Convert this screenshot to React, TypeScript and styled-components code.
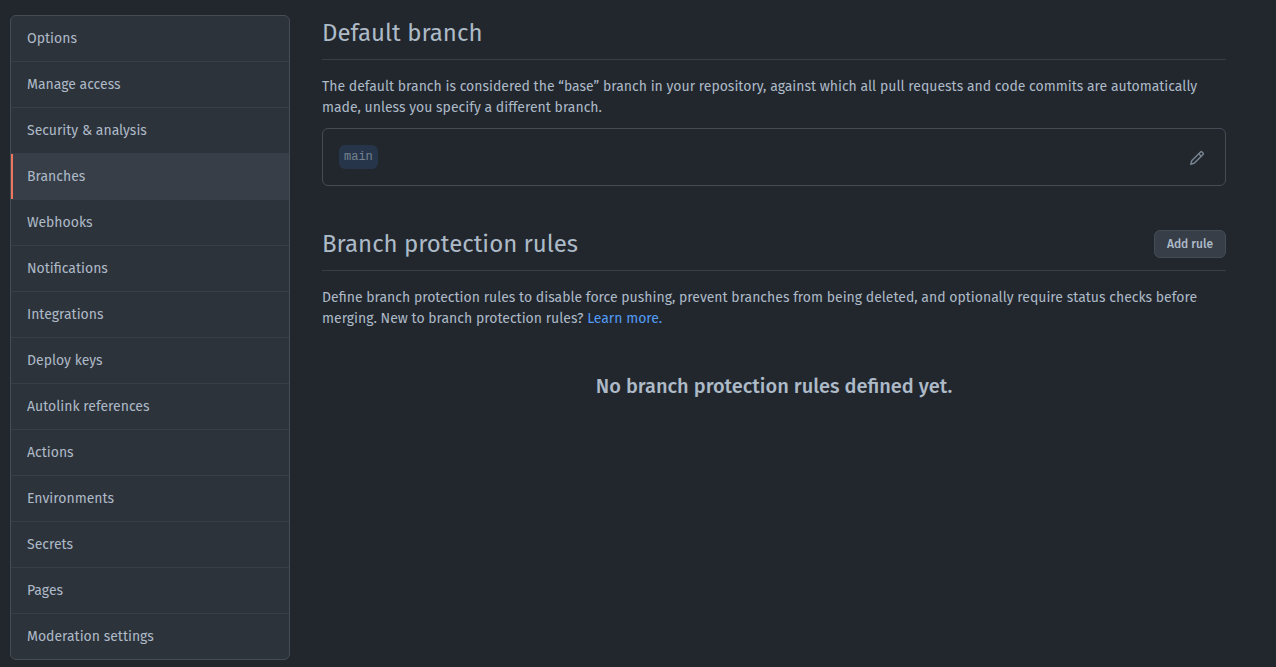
import React from "react";
import styled, { createGlobalStyle } from "styled-components";

const GlobalStyle = createGlobalStyle`
  * { box-sizing: border-box; }
  body {
    margin: 0;
    background: #22272e;
    color: #adbac7;
    font-family: "Fira Sans", "Noto Sans", "Open Sans", sans-serif;
    font-size: 14px;
    line-height: 21px;
  }
`;

const Page = styled.div`
  display: flex;
  align-items: flex-start;
  gap: 32px;
  padding: 15px 50px 7px 10px;
`;

const Menu = styled.nav`
  flex: 0 0 280px;
  border: 1px solid #444c56;
  border-radius: 6px;
  background: #2d333b;
  overflow: hidden;
`;

const MenuItem = styled.a<{ $current: boolean }>`
  display: block;
  padding: 12px 16px;
  color: #adbac7;
  text-decoration: none;
  background: ${(p) => (p.$current ? "#373e47" : "transparent")};
  box-shadow: ${(p) => (p.$current ? "inset 2px 0 0 #ec775c" : "none")};
  border-bottom: 1px solid #373e47;

  &:last-child {
    border-bottom: 0;
  }
`;

const Content = styled.main`
  flex: 1;
  min-width: 0;
`;

const Section = styled.section`
  & + & {
    margin-top: 40px;
  }
`;

const SectionHeader = styled.header`
  display: flex;
  justify-content: space-between;
  align-items: center;
  padding-bottom: 8px;
  margin-bottom: 16px;
  border-bottom: 1px solid #373e47;
`;

const Title = styled.h2`
  margin: 0;
  font-size: 24px;
  line-height: 36px;
  font-weight: 400;
`;

const Text = styled.p`
  margin: 0;
`;

const Link = styled.a`
  color: #539bf5;
  text-decoration: none;
`;

const BranchBox = styled.div`
  display: flex;
  justify-content: space-between;
  align-items: center;
  margin-top: 10px;
  padding: 16px;
  border: 1px solid #444c56;
  border-radius: 6px;
`;

const BranchName = styled.code`
  padding: 0 5px;
  border-radius: 6px;
  background: #263549;
  color: #768390;
  font-family: "Liberation Mono", monospace;
  font-size: 12px;
  line-height: 24px;
`;

const IconButton = styled.button`
  display: flex;
  padding: 5px 4px 3px;
  border: 0;
  background: none;
  color: #768390;
`;

const Button = styled.button`
  padding: 3px 12px;
  border: 1px solid #444c56;
  border-radius: 6px;
  background: #373e47;
  color: #adbac7;
  font-family: inherit;
  font-size: 12px;
  font-weight: 500;
  line-height: 20px;
`;

const Blank = styled.h3`
  margin: 40px 0 0;
  font-size: 20px;
  line-height: 34px;
  font-weight: 500;
  text-align: center;
`;

const items = [
  "Options",
  "Manage access",
  "Security & analysis",
  "Branches",
  "Webhooks",
  "Notifications",
  "Integrations",
  "Deploy keys",
  "Autolink references",
  "Actions",
  "Environments",
  "Secrets",
  "Pages",
  "Moderation settings",
];

const PencilIcon = () => (
  <svg width="16" height="16" viewBox="0 0 16 16" fill="currentColor" aria-hidden="true">
    <path
      fillRule="evenodd"
      d="M11.013 1.427a1.75 1.75 0 012.474 0l1.086 1.086a1.75 1.75 0 010 2.474l-8.61 8.61c-.21.21-.47.364-.756.445l-3.251.93a.75.75 0 01-.927-.928l.929-3.25a1.75 1.75 0 01.445-.758l8.61-8.61zm1.414 1.06a.25.25 0 00-.354 0L10.811 3.75l1.439 1.44 1.263-1.263a.25.25 0 000-.354l-1.086-1.086zM11.189 6.25L9.75 4.81l-6.286 6.287a.25.25 0 00-.064.108l-.558 1.953 1.953-.558a.249.249 0 00.108-.064l6.286-6.286z"
    />
  </svg>
);

export default function App() {
  return (
    <>
      <GlobalStyle />
      <Page>
        <Menu aria-label="Repository settings">
          {items.map((item) => (
            <MenuItem
              key={item}
              href="#"
              $current={item === "Branches"}
              aria-current={item === "Branches" ? "page" : undefined}
            >
              {item}
            </MenuItem>
          ))}
        </Menu>
        <Content>
          <Section>
            <SectionHeader>
              <Title>Default branch</Title>
            </SectionHeader>
            <Text>
              The default branch is considered the “base” branch in your repository, against which
              all pull requests and code commits are automatically made, unless you specify a
              different branch.
            </Text>
            <BranchBox>
              <BranchName>main</BranchName>
              <IconButton type="button" aria-label="Rename branch">
                <PencilIcon />
              </IconButton>
            </BranchBox>
          </Section>
          <Section>
            <SectionHeader>
              <Title>Branch protection rules</Title>
              <Button type="button">Add rule</Button>
            </SectionHeader>
            <Text>
              Define branch protection rules to disable force pushing, prevent branches from being
              deleted, and optionally require status checks before merging. New to branch
              protection rules? <Link href="#">Learn more.</Link>
            </Text>
            <Blank>No branch protection rules defined yet.</Blank>
          </Section>
        </Content>
      </Page>
    </>
  );
}
